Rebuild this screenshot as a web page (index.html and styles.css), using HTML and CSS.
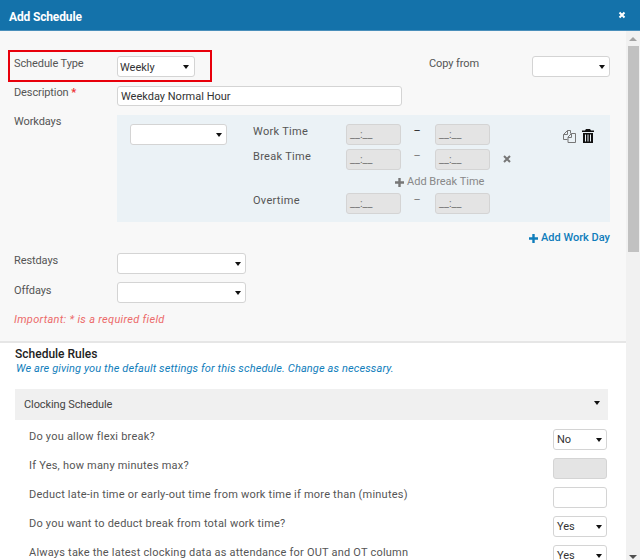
FILE: index.html
```html
<!DOCTYPE html>
<html lang="en">
<head>
<meta charset="utf-8">
<title>Add Schedule</title>
<link rel="stylesheet" href="styles.css">
</head>
<body>
<div class="modal">
  <header class="modal-head">
    <h1>Add Schedule</h1>
    <svg class="close" viewBox="0 0 8 8" width="8" height="8"><path d="M1.500 1.500l5 5M6.500 1.500l-5 5" stroke="#fff" stroke-width="2"/></svg>
  </header>
  <div class="modal-body">
    <main class="content">
      <section class="top">
        <div class="row row-type">
          <label class="lbl">Schedule Type</label>
          <div class="select s-type">Weekly<i class="caret"></i></div>
          <label class="lbl copy-lbl">Copy from</label>
          <div class="select s-copy"><i class="caret"></i></div>
        </div>
        <div class="row row-desc">
          <label class="lbl">Description <span class="req">*</span></label>
          <div class="input s-desc">Weekday Normal Hour</div>
        </div>
        <div class="row row-work">
          <label class="lbl">Workdays</label>
          <div class="panel-wrap">
            <div class="panel">
              <div class="select s-day"><i class="caret"></i></div>
              <div class="times">
                <div class="t-row"><span class="t-lbl">Work Time</span><div class="time">__:__</div><span class="dash">–</span><div class="time">__:__</div></div>
                <div class="t-row"><span class="t-lbl">Break Time</span><div class="time">__:__</div><span class="dash dash-g">–</span><div class="time">__:__</div>
                  <svg class="x" viewBox="0 0 8 8" width="8" height="8"><path d="M1 1l6 6M7 1l-6 6" stroke="#777" stroke-width="2"/></svg></div>
                <div class="add-break"><svg viewBox="0 0 9 9" width="9" height="9"><path d="M4.500 0v9M0 4.500h9" stroke="#777" stroke-width="2.400"/></svg>Add Break Time</div>
                <div class="t-row"><span class="t-lbl">Overtime</span><div class="time">__:__</div><span class="dash dash-g">–</span><div class="time">__:__</div></div>
              </div>
              <div class="tools">
                <svg viewBox="0 0 14 14" width="14" height="14" fill="none" stroke="#777" stroke-width="1"><path d="M8.500 4.500V1.500H5.500L1.500 5.500V10.500H5.500"/><path d="M1.500 5.500H5.500V1.500"/><path d="M9.500 4.500H13.500V13.500H6V8z"/><path d="M6 8.500H9.500V4.500"/></svg>
                <svg viewBox="0 0 12 14" width="12" height="14"><path fill="#111" fill-rule="evenodd" d="M4 0h4l1 1.500h3V3H0V1.500h3zM1 4h10v10H1zM3 5.500v7h1v-7zM5.500 5.500v7h1v-7zM8 5.500v7h1v-7z"/></svg>
              </div>
            </div>
            <div class="add-day"><svg viewBox="0 0 9 9" width="9" height="9"><path d="M4.500 0v9M0 4.500h9" stroke="#0f7dbb" stroke-width="2.400"/></svg>Add Work Day</div>
          </div>
        </div>
        <div class="row row-rest">
          <label class="lbl">Restdays</label>
          <div class="select s-rest"><i class="caret"></i></div>
        </div>
        <div class="row row-off">
          <label class="lbl">Offdays</label>
          <div class="select s-rest"><i class="caret"></i></div>
        </div>
        <p class="important">Important: * is a required field</p>
      </section>
      <section class="rules">
        <h2>Schedule Rules</h2>
        <p class="note">We are giving you the default settings for this schedule. Change as necessary.</p>
        <div class="acc-head"><span>Clocking Schedule</span><i class="caret"></i></div>
        <div class="rule"><span>Do you allow flexi break?</span><div class="select s-mini">No<i class="caret"></i></div></div>
        <div class="rule"><span>If Yes, how many minutes max?</span><div class="input s-mini disabled"></div></div>
        <div class="rule"><span>Deduct late-in time or early-out time from work time if more than (minutes)</span><div class="input s-mini"></div></div>
        <div class="rule"><span>Do you want to deduct break from total work time?</span><div class="select s-mini">Yes<i class="caret"></i></div></div>
        <div class="rule"><span>Always take the latest clocking data as attendance for OUT and OT column</span><div class="select s-mini">Yes<i class="caret"></i></div></div>
      </section>
    </main>
    <aside class="scrollbar">
      <i class="arrow-up"></i>
      <div class="thumb"></div>
      <i class="arrow-down"></i>
    </aside>
  </div>
</div>
<div class="highlight"></div>
</body>
</html>
```

FILE: styles.css
```css
* { box-sizing: border-box; }
html, body { margin: 0; height: 560px; overflow: hidden; }
body { font-family: "Roboto", "Liberation Sans", sans-serif; font-size: 11px; color: #555; position: relative; background: #fff; }
.modal { height: 560px; display: flex; flex-direction: column; }
.modal-head { height: 31px; flex: none; background: #1472aa; border-bottom: 1px solid #4a8fbb; display: flex; align-items: center; justify-content: space-between; padding: 0 14px 0 9px; }
.modal-head h1 { margin: 4px 0 0; font-size: 12px; font-weight: 700; color: #fff; letter-spacing: -.15px; }
.modal-body { flex: 1; display: flex; min-height: 0; }
.content { flex: 1; min-width: 0; overflow: hidden; }
.top { height: 312px; background: #f8f8f8; border-bottom: 2px solid #e6e6e6; padding: 25px 16px 0 14px; }
.row { display: flex; align-items: flex-start; }
.lbl { width: 103px; flex: none; line-height: 16px; color: #555; letter-spacing: -.1px; }
.req { color: #e33; font-weight: 700; }
.select, .input { height: 21px; background: #fff; border: 1px solid #d4d4d4; border-radius: 3px; line-height: 19px; padding-left: 3px; color: #333; position: relative; }
.caret { position: absolute; right: 4px; top: 8px; width: 0; height: 0; border-left: 3.500px solid transparent; border-right: 3.500px solid transparent; border-top: 4px solid #111; }
.s-type { width: 78px; padding: 1px 0 0 2px; }
.s-type .caret { right: 5px; }
.copy-lbl { margin-left: 234px; width: 103px; }
.s-copy { width: 78px; }
.row-desc { margin-top: 9px; }
.row-desc .lbl { margin-top: -1px; }
.s-desc { width: 285px; height: 20px; }
.row-work { margin-top: 9px; }
.row-work .lbl { margin-top: -1px; }
.panel-wrap { flex: 1; }
.panel { height: 107px; background: #ebf2f6; display: flex; padding: 9px 0 0 13px; position: relative; }
.s-day { width: 97px; flex: none; }
.times { margin-left: 26px; flex: none; }
.t-row { display: flex; align-items: flex-start; height: 25px; }
.t-lbl { width: 93px; line-height: 14px; padding-top: 1px; letter-spacing: .3px; }
.time { width: 55px; height: 21px; background: #e4e4e4; border: 1px solid #d4d4d4; border-radius: 3px; color: #777; font-size: 11px; line-height: 14px; padding: 3px 0 0 3px; }
.dash { width: 32px; margin-right: 2px; padding-top: 1px; text-align: center; color: #222; line-height: 12px; }
.dash-g { color: #777; }
.x { margin: 6px 0 0 13px; }
.add-break { height: 19px; padding: 1px 0 0 142px; color: #888; display: flex; align-items: flex-start; gap: 3px; line-height: 14px; white-space: nowrap; }
.add-break svg { margin-top: 3px; }
.tools { position: absolute; left: 445px; top: 14px; display: flex; gap: 6px; }
.add-day { height: 31px; padding-top: 9px; display: flex; justify-content: flex-end; align-items: flex-start; gap: 3px; color: #0f7dbb; line-height: 14px; font-weight: 500; }
.add-day svg { margin-top: 3px; }
.row-off { margin-top: 8px; }
.row-off .lbl { padding-top: 1px; }
.s-rest { width: 129px; }
.important { margin: 10px 0 0; color: #ec6a6a; font-style: italic; line-height: 14px; letter-spacing: .3px; }
.rules { padding: 4px 18px 0 15px; background: #fff; }
.rules h2 { margin: 0; font-size: 12px; font-weight: 500; color: #222; line-height: 15px; }
.note { margin: 0 0 0 1px; color: #0f7dbb; font-style: italic; line-height: 13px; letter-spacing: .12px; }
.acc-head { margin-top: 14px; height: 31px; background: #f0f0f0; display: flex; align-items: center; justify-content: space-between; padding: 0 9px; position: relative; color: #444; letter-spacing: -.1px; }
.acc-head .caret { top: 12px; right: 8px; }
.rule { height: 29px; display: flex; align-items: flex-start; justify-content: space-between; padding: 0 1px 0 14px; color: #555; line-height: 14px; }
.rule span { white-space: nowrap; margin-top: 1px; letter-spacing: .21px; }
.acc-head + .rule { margin-top: 9px; }
.s-mini { width: 54px; flex: none; }
.disabled { background: #e4e4e4; }
.scrollbar { width: 14px; flex: none; background: #f1f1f1; position: relative; display: flex; flex-direction: column; align-items: center; }
.thumb { width: 11px; height: 206px; background: #c1c1c1; margin-top: 15px; }
.arrow-up { position: absolute; top: 6px; left: 3px; width: 0; height: 0; border-left: 4px solid transparent; border-right: 4px solid transparent; border-bottom: 4px solid #a3a3a3; }
.arrow-down { position: absolute; bottom: 1px; left: 3px; width: 0; height: 0; border-left: 4px solid transparent; border-right: 4px solid transparent; border-top: 4px solid #505050; }
.highlight { position: absolute; left: 8px; top: 50px; width: 204px; height: 32px; border: 2px solid #e8000b; pointer-events: none; }
```
